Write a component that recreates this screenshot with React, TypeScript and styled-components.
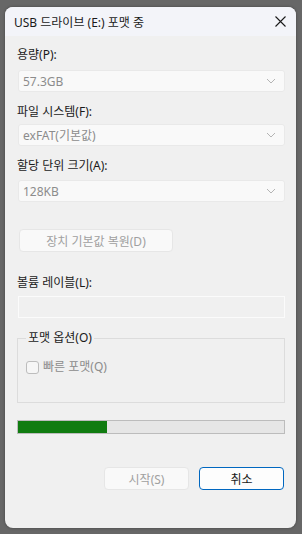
import React from 'react';
import styled, { createGlobalStyle } from 'styled-components';

const Global = createGlobalStyle`
  html, body {
    margin: 0;
    padding: 0;
    background: #676767;
  }
  body {
    font-family: 'Segoe UI', 'Noto Sans', 'Noto Sans CJK KR', sans-serif;
    font-size: 12px;
  }
`;

const Page = styled.div`
  padding: 7px 6px 6px 5px;
`;

const Window = styled.div`
  width: 291px;
  height: 521px;
  background: #f0f0f0;
  border-radius: 8px;
  overflow: hidden;
  display: flex;
  flex-direction: column;
  box-shadow: 0 0 3px rgba(0, 0, 0, 0.35);
`;

const TitleBar = styled.div`
  height: 29px;
  flex: none;
  background: #f3f4f9;
  display: flex;
  align-items: center;
  justify-content: space-between;
  padding: 0 9px 0 9px;
  color: #1a1a1a;
  font-size: 12px;
`;

const CloseButton = styled.div`
  width: 14px;
  height: 14px;
  display: flex;
  align-items: center;
  justify-content: center;
`;

const Body = styled.div`
  flex: 1;
  display: flex;
  flex-direction: column;
  padding: 11px 11px 0 12px;
`;

const Label = styled.div<{ $mt?: number }>`
  line-height: 16px;
  color: #1a1a1a;
  margin-top: ${p => p.$mt ?? 0}px;
`;

const Combo = styled.div<{ $mt?: number }>`
  height: 20px;
  margin-top: ${p => p.$mt ?? 0}px;
  margin-left: 1px;
  background: #f9f9f9;
  border: 1px solid #e9e9e9;
  border-radius: 3px;
  display: flex;
  align-items: center;
  justify-content: space-between;
  padding: 0 8px 0 4px;
  color: #8c8c8c;
`;

const Chevron = () => (
  <svg width="10" height="6" viewBox="0 0 10 6">
    <path d="M1 1 L5 5 L9 1" fill="none" stroke="#b4b4b4" strokeWidth="1" />
  </svg>
);

const PushButton = styled.div<{ $primary?: boolean; $width: number }>`
  width: ${p => p.$width}px;
  height: 21px;
  box-sizing: content-box;
  border-radius: 4px;
  display: flex;
  align-items: center;
  justify-content: center;
  background: ${p => (p.$primary ? '#fdfdfd' : '#f9f9f9')};
  border: 1px solid ${p => (p.$primary ? '#0067c0' : '#e6e6e6')};
  color: ${p => (p.$primary ? '#1a1a1a' : '#a0a0a0')};
`;

const RestoreRow = styled.div`
  margin-top: 27px;
  margin-left: 2px;
  display: flex;
`;

const TextBox = styled.div`
  height: 20px;
  margin-top: 5px;
  margin-left: 1px;
  border: 1px solid #fbfbfb;
  background: #f0f0f0;
`;

const GroupBox = styled.fieldset`
  box-sizing: border-box;
  margin: 12px 0 0 0;
  padding: 13px 8px 0 8px;
  height: 73px;
  border: 1px solid #dcdcdc;
  border-radius: 0;
  min-width: 0;
`;

const Legend = styled.legend`
  padding: 0 2px;
  margin-left: 0;
  color: #1a1a1a;
  line-height: 16px;
`;

const CheckRow = styled.div`
  display: flex;
  align-items: center;
  gap: 4px;
  color: #8c8c8c;
  line-height: 16px;
`;

const CheckBox = styled.div`
  width: 11px;
  height: 11px;
  border: 1px solid #bdbdbd;
  border-radius: 3px;
  background: #f6f6f6;
`;

const Progress = styled.div`
  margin-top: 17px;
  height: 12px;
  border: 1px solid #bcbcbc;
  background: #e6e6e6;
`;

const ProgressFill = styled.div`
  height: 100%;
  background: #107c10;
`;

const Footer = styled.div`
  margin-top: 33px;
  display: flex;
  justify-content: flex-end;
  gap: 10px;
  padding-right: 1px;
`;

export default function App() {
  const progress = 33.5;
  return (
    <>
      <Global />
      <Page>
        <Window>
          <TitleBar>
            <span>USB 드라이브 (E:) 포맷 중</span>
            <CloseButton>
              <svg width="11" height="11" viewBox="0 0 11 11">
                <path d="M0.5 0.5 L10.5 10.5 M10.5 0.5 L0.5 10.5" stroke="#1a1a1a" strokeWidth="1.1" />
              </svg>
            </CloseButton>
          </TitleBar>
          <Body>
            <Label>용량(P):</Label>
            <Combo $mt={7}>
              <span>57.3GB</span>
              <Chevron />
            </Combo>
            <Label $mt={12}>파일 시스템(F):</Label>
            <Combo $mt={4}>
              <span>exFAT(기본값)</span>
              <Chevron />
            </Combo>
            <Label $mt={12}>할당 단위 크기(A):</Label>
            <Combo $mt={6}>
              <span>128KB</span>
              <Chevron />
            </Combo>
            <RestoreRow>
              <PushButton $width={152}>장치 기본값 복원(D)</PushButton>
            </RestoreRow>
            <Label $mt={23}>볼륨 레이블(L):</Label>
            <TextBox />
            <GroupBox>
              <Legend>포맷 옵션(O)</Legend>
              <CheckRow>
                <CheckBox />
                <span>빠른 포맷(Q)</span>
              </CheckRow>
            </GroupBox>
            <Progress>
              <ProgressFill style={{ width: `${progress}%` }} />
            </Progress>
            <Footer>
              <PushButton $width={83}>시작(S)</PushButton>
              <PushButton $width={83} $primary>취소</PushButton>
            </Footer>
          </Body>
        </Window>
      </Page>
    </>
  );
}
